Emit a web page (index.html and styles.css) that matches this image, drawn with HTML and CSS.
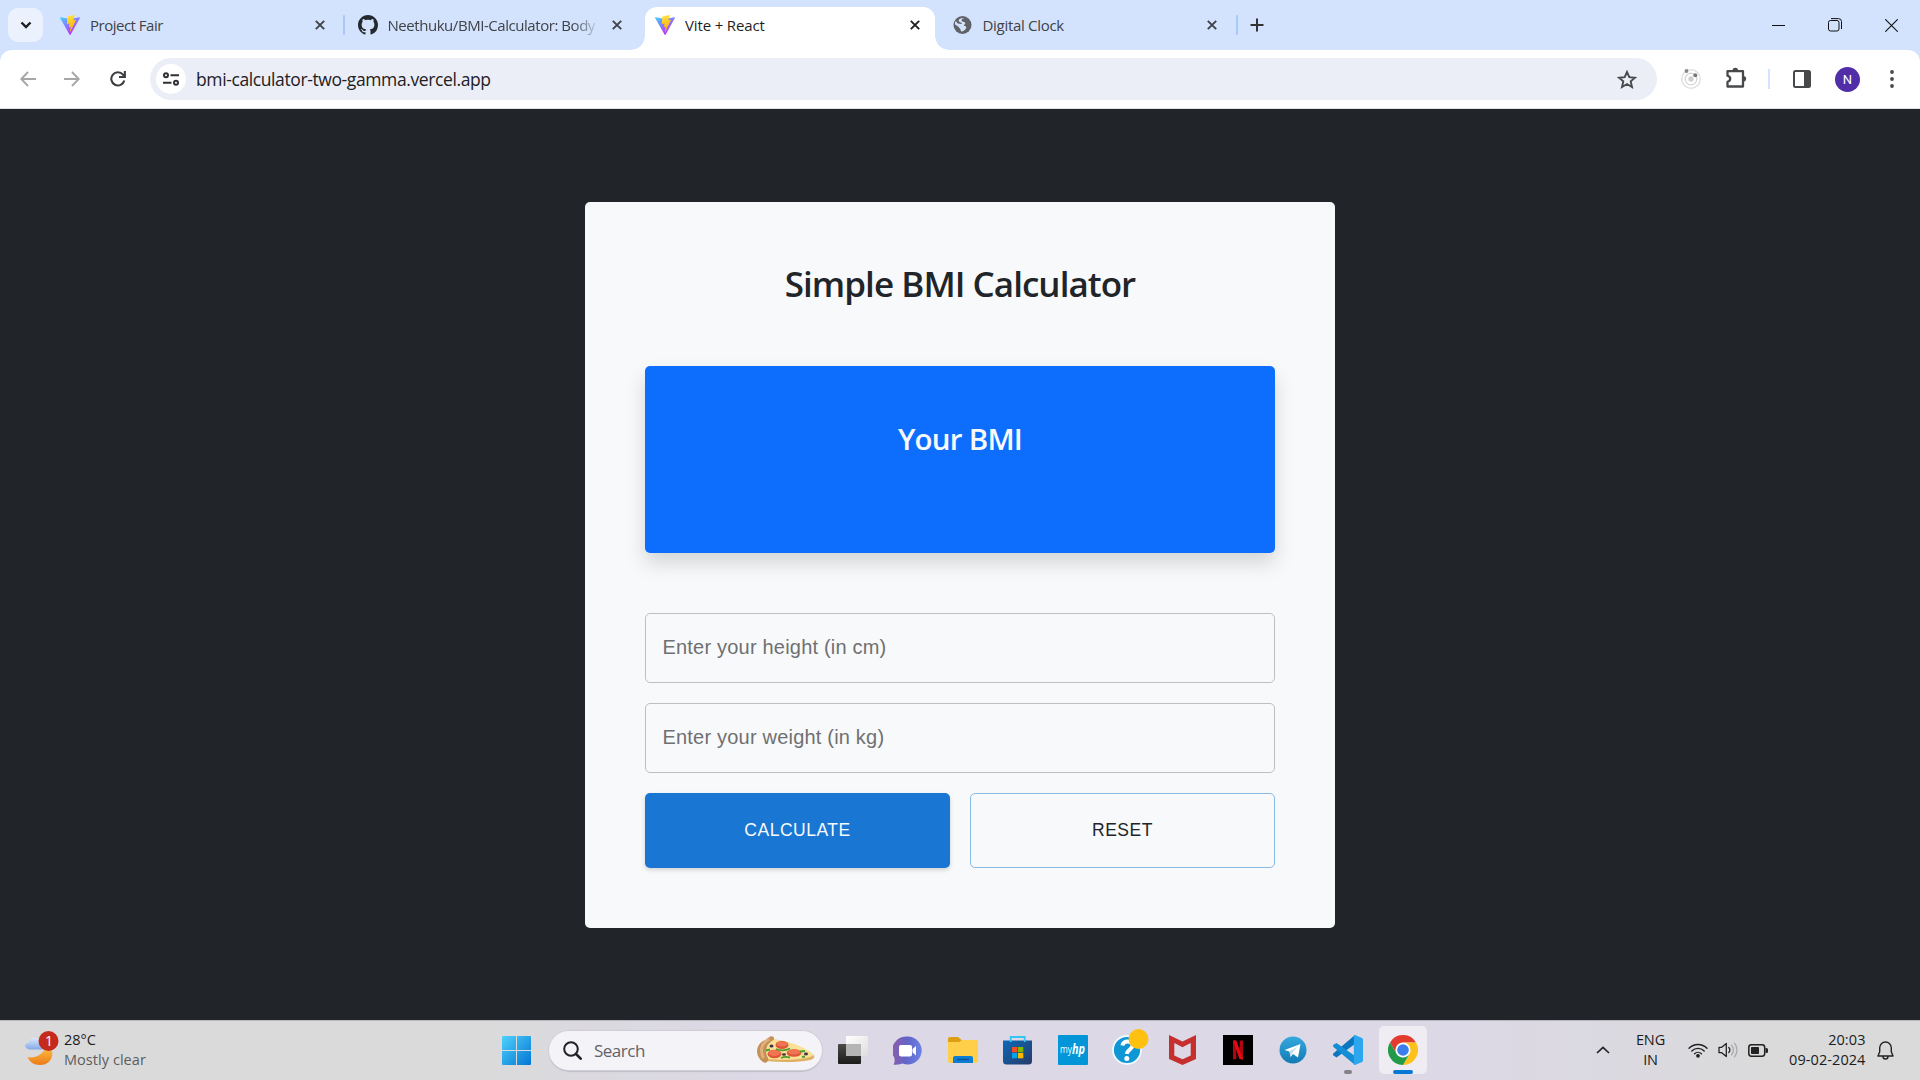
FILE: index.html
```html
<!DOCTYPE html>
<html lang="en">
<head>
<meta charset="utf-8">
<title>Vite + React</title>
<link rel="stylesheet" href="styles.css">
</head>
<body>
<svg width="0" height="0" class="defs" aria-hidden="true">
  <defs>
    <linearGradient id="vite-a" x1="0" y1="0" x2="0.6" y2="0.9"><stop offset="0" stop-color="#41d1ff"/><stop offset="1" stop-color="#bd34fe"/></linearGradient>
    <linearGradient id="vite-b" x1="0.4" y1="0" x2="0.6" y2="1"><stop offset="0" stop-color="#ffea83"/><stop offset="0.1" stop-color="#ffdd35"/><stop offset="1" stop-color="#ffa800"/></linearGradient>
    <symbol id="vite" viewBox="0 0 256 257">
      <path fill="url(#vite-a)" d="M255.2 37.9 134.9 253.1c-2.5 4.4-8.9 4.5-11.4 0L.9 37.9c-2.7-4.8 1.4-10.6 6.8-9.6l120.4 21.5c.8.1 1.6.1 2.3 0l117.9-21.5c5.4-1 9.6 4.8 6.9 9.6z"/>
      <path fill="url(#vite-b)" d="M185.4.1 96.4 17.5a3.3 3.3 0 0 0-2.6 3l-5.5 92.5a3.3 3.3 0 0 0 4 3.4l24.8-5.7c2.3-.5 4.4 1.5 3.9 3.8l-7.3 36c-.5 2.4 1.8 4.5 4.1 3.8l15.3-4.7c2.4-.7 4.6 1.4 4.1 3.8l-11.7 56.6c-.7 3.5 4 5.5 5.9 2.5l1.3-2 72.5-144.7c1.2-2.4-.9-5.2-3.5-4.7l-25.5 5c-2.4.4-4.4-1.8-3.8-4.1l16.7-57.7c.7-2.3-1.4-4.5-3.7-4.2z"/>
    </symbol>
    <symbol id="close" viewBox="0 0 10 10"><path d="M.8.8 9.2 9.2M9.2.8.8 9.2" stroke="currentColor" stroke-width="1.9" fill="none"/></symbol>
  </defs>
</svg>

<div class="screen">
  <header class="tabstrip">
    <button class="tab-search" aria-label="Search tabs"><svg width="12" height="8" viewBox="0 0 12 8"><path d="M1.5 1.5 6 6l4.500-4.500" fill="none" stroke="#1f1f1f" stroke-width="2.400"/></svg></button>
    <div class="tab">
      <svg class="favicon"><use href="#vite"/></svg>
      <span class="tab-title t1">Project Fair</span>
      <svg class="tab-close"><use href="#close"/></svg>
    </div>
    <i class="tab-sep"></i>
    <div class="tab">
      <svg class="favicon" viewBox="0 0 16 16"><path fill="#24292f" d="M8 0C3.580 0 0 3.580 0 8c0 3.540 2.290 6.530 5.470 7.590.4.070.55-.17.55-.38 0-.19-.01-.82-.01-1.490-2.010.37-2.530-.49-2.690-.94-.09-.23-.48-.94-.82-1.130-.28-.15-.68-.52-.01-.53.63-.01 1.080.58 1.230.82.72 1.210 1.870.87 2.330.66.070-.52.28-.87.51-1.070-1.780-.2-3.640-.89-3.640-3.950 0-.87.31-1.590.82-2.150-.08-.2-.36-1.020.08-2.120 0 0 .67-.21 2.200.82.64-.18 1.320-.27 2-.27s1.360.09 2 .27c1.530-1.040 2.200-.82 2.200-.82.44 1.100.16 1.920.08 2.120.51.56.82 1.270.82 2.150 0 3.070-1.870 3.750-3.650 3.950.29.25.54.73.54 1.480 0 1.070-.01 1.930-.01 2.200 0 .21.15.46.55.38A8 8 0 0 0 16 8c0-4.420-3.580-8-8-8z"/></svg>
      <span class="tab-title t2 faded">Neethuku/BMI-Calculator: Body</span>
      <svg class="tab-close"><use href="#close"/></svg>
    </div>
    <i class="tab-sep clear"></i>
    <div class="tab active">
      <svg class="favicon"><use href="#vite"/></svg>
      <span class="tab-title t3">Vite + React</span>
      <svg class="tab-close"><use href="#close"/></svg>
    </div>
    <i class="tab-sep clear"></i>
    <div class="tab">
      <svg class="favicon" viewBox="0 0 20 20"><circle cx="9.500" cy="10" r="9" fill="#5f6368"/><path d="M11.200 3.200c-2 .2-2.700 1-2.500 2.200.2 1.100 1 1.200 2.400 1.500 1.500.3 1.500 2 .4 2.500-1.200.6-.7 1.400.6 1.600 1.400.2 1.600 1.900.5 3-1.200 1.200-2.400 2.700-4.500 2.600l-.8-2.600-2.200-2.600-3-2c-.4-1.400 0-2.500.5-3.300l2.200 2.300 3.700.7c.7-.4.3-1.500-.8-1.700-1.500-.3-2.400-1-1.900-2.300.5-1.200 2.300-2.400 5.400-1.900z" fill="#d3e3fd"/></svg>
      <span class="tab-title t4">Digital Clock</span>
      <svg class="tab-close"><use href="#close"/></svg>
    </div>
    <i class="tab-sep last"></i>
    <svg class="new-tab" width="14" height="14" viewBox="0 0 14 14"><path d="M7 .5v13M.5 7h13" stroke="#333" stroke-width="2"/></svg>
    <div class="window-controls">
      <svg width="13" height="13" viewBox="0 0 13 13"><path d="M0 6.500h13" stroke="#111"/></svg>
      <svg width="14" height="14" viewBox="0 0 14 14" fill="none" stroke="#111"><rect x=".5" y="2.500" width="10.500" height="10.500" rx="2"/><path d="M3 .6h7.500a3 3 0 0 1 3 3V11"/></svg>
      <svg width="13" height="13" viewBox="0 0 13 13"><path d="m.3.3 12.400 12.400M12.700.3.300 12.700" stroke="#111" stroke-width="1.100"/></svg>
    </div>
  </header>

  <nav class="toolbar">
    <svg class="nav-icon back" viewBox="0 0 16 16"><path d="M8 1 1.300 8 8 15M1.500 8H16" fill="none" stroke="#a5a7a9" stroke-width="1.900"/></svg>
    <svg class="nav-icon forward" viewBox="0 0 16 16"><path d="m8 1 6.700 7L8 15M14.500 8H0" fill="none" stroke="#a5a7a9" stroke-width="1.900"/></svg>
    <svg class="nav-icon reload" viewBox="0 0 16 16"><path d="M14.300 9.500A6.600 6.600 0 1 1 13 3.700l1.500 1.800" fill="none" stroke="#3c3e40" stroke-width="2.100"/><path d="M15.900 0v7H9V5h4.800V0z" fill="#3c3e40"/></svg>
    <div class="omnibox">
      <span class="site-info"><svg width="16" height="14" viewBox="0 0 16 14" fill="none" stroke="#303234" stroke-width="2"><circle cx="3" cy="3.200" r="2"/><path d="M7.500 3.200H16M0 10.800h8.500"/><circle cx="13" cy="10.800" r="2"/></svg></span>
      <span class="url">bmi-calculator-two-gamma.vercel.app</span>
      <svg class="star" width="20" height="19" viewBox="0 0 20 19"><path d="m10 2 2.300 5.200 5.700.5-4.300 3.700 1.300 5.600-5-3-5 3 1.300-5.600L2 7.700l5.700-.5z" fill="none" stroke="#47494b" stroke-width="1.900"/></svg>
    </div>
    <svg class="ext" width="20" height="22" viewBox="0 0 20 22" fill="none"><circle cx="10" cy="12" r="9.300" stroke="#dedede" stroke-width="1.300"/><circle cx="10" cy="12" r="5.800" stroke="#d6d6d6" stroke-width="1.300"/><circle cx="10" cy="12" r="2.700" fill="#cfcfcf"/><circle cx="5.500" cy="4" r="1.900" fill="#888"/><circle cx="14.300" cy="8.300" r="2" fill="#777"/></svg>
    <svg class="puzzle" width="21" height="21" viewBox="0 0 21 21"><path d="M1.500 4.200H17V19.500H1.500v-4.600c3.600-1.200 3.600-5 0-6.200z" fill="none" stroke="#47494b" stroke-width="2.300" stroke-linejoin="round"/><path d="M6.500 4a2.800 3.200 0 0 1 5.600 0zM17 9a3.200 2.800 0 0 1 0 5.600z" fill="#47494b"/></svg>
    <i class="tool-sep"></i>
    <svg class="panel" width="18" height="18" viewBox="0 0 18 18"><rect x="1" y="1" width="16" height="16" rx="1.500" fill="none" stroke="#47494b" stroke-width="2"/><path d="M11 1h6v16h-6z" fill="#47494b"/></svg>
    <span class="avatar">N</span>
    <svg class="kebab" width="4" height="18" viewBox="0 0 4 18" fill="#47494b"><circle cx="2" cy="2" r="1.900"/><circle cx="2" cy="9" r="1.900"/><circle cx="2" cy="16" r="1.900"/></svg>
  </nav>

  <main class="page">
    <section class="card">
      <h1 class="title">Simple BMI Calculator</h1>
      <div class="result"><h3 class="result-title">Your BMI</h3></div>
      <form class="form">
        <input class="field" type="text" placeholder="Enter your height (in cm)">
        <input class="field" type="text" placeholder="Enter your weight (in kg)">
        <div class="actions">
          <button class="btn primary" type="button">CALCULATE</button>
          <button class="btn outlined" type="button">RESET</button>
        </div>
      </form>
    </section>
  </main>

  <footer class="taskbar">
    <div class="weather">
      <svg width="35" height="36" viewBox="0 0 35 36">
        <defs><linearGradient id="moon" x1="0" y1="0" x2="0" y2="1"><stop offset="0" stop-color="#ffc94a"/><stop offset="1" stop-color="#ec7a18"/></linearGradient><linearGradient id="cloud" x1="0" y1="0" x2="0" y2="1"><stop offset="0" stop-color="#dce9fb"/><stop offset="1" stop-color="#84a9e8"/></linearGradient></defs>
        <path d="M2.500 26c8 2 17-3 18.500-12 9 1 9.500 20-6 20-6 0-10.500-3-12.500-8z" fill="url(#moon)"/>
        <path d="M4 18.500C-2 17-.2 11.500 4 11.800 4 6 12 5 14 10l4 2v6.500z" fill="url(#cloud)"/>
        <circle cx="23.500" cy="10" r="10" fill="#c42b1c"/>
        <text x="24" y="15" class="badge">1</text>
      </svg>
      <div class="weather-text"><b class="temp">28°C</b><span class="cond">Mostly clear</span></div>
    </div>
    <div class="apps">
      <span class="app"><svg width="29" height="29" viewBox="0 0 29 29"><defs><linearGradient id="win" x1="0" y1="0" x2="1" y2="1"><stop offset="0" stop-color="#4fd2fb"/><stop offset="1" stop-color="#0275d4"/></linearGradient></defs><path d="M1 0h13v14H0V1a1 1 0 0 1 1-1zM15 0h13a1 1 0 0 1 1 1v13H15zM0 15h14v14H1a1 1 0 0 1-1-1zM15 15h14v13a1 1 0 0 1-1 1H15z" fill="url(#win)"/></svg></span>
      <div class="search">
        <svg width="19" height="19" viewBox="0 0 19 19" fill="none" stroke="#222"><circle cx="8" cy="8" r="6.800" stroke-width="2"/><path d="m13 13 4.700 4.700" stroke-width="2.600" stroke-linecap="round"/></svg>
        <span class="search-text">Search</span>
        <svg class="pizza" width="60" height="29" viewBox="0 0 60 29">
          <path d="M10 4 14 3C30 4 50 12 58 19.500c1 2-1 4-4 4.500-12 2.500-28 2.500-44 1z" fill="#dfb063"/>
          <path d="M12 3C28 3 50 11 58 19c-5 4-24 6-49 4z" fill="#fae195"/>
          <path d="M14 .7c3-1.200 5 1 3.500 3.300C10 8 8 15 12 22c1 4-2.500 6-5 4C-1 20-1 10 7 5c3-1 4.500-3 7-4.300z" fill="#c59058"/>
          <path d="M13 3C6 7 3.500 14 7.500 22" stroke="#deb17c" stroke-width="3" fill="none"/>
          <g fill="#dc5637"><ellipse cx="26" cy="9" rx="6.500" ry="4"/><ellipse cx="18.500" cy="18" rx="7" ry="4.200"/><ellipse cx="38" cy="17" rx="7.300" ry="3.800"/></g>
          <g fill="#f17552"><ellipse cx="26" cy="8" rx="5.500" ry="2.600"/><ellipse cx="18.500" cy="17" rx="6" ry="2.900"/><ellipse cx="38" cy="16" rx="6.200" ry="2.500"/></g>
          <path d="M20 13q7 3 14-.5M25 22q4-2 9-.5M10 14.500l4-1M44 15.500l5-.5M49 20.500l-3 .500" stroke="#4f9c31" stroke-width="1.900" fill="none"/>
          <g fill="#44304b"><ellipse cx="15.500" cy="10" rx="2" ry="1.500"/><ellipse cx="28" cy="18.500" rx="2" ry="1.300"/><ellipse cx="50" cy="18" rx="2" ry="1.400"/></g>
        </svg>
      </div>
      <span class="app"><svg width="30" height="30" viewBox="0 0 30 30"><defs><linearGradient id="tv" x1="0" y1="0" x2="0" y2="1"><stop offset="0" stop-color="#4a4a48"/><stop offset="1" stop-color="#1c1c1b"/></linearGradient><linearGradient id="tv2" x1="0" y1="0" x2="1" y2="1"><stop offset="0" stop-color="#fff"/><stop offset="1" stop-color="#dedede"/></linearGradient></defs><rect y="9" width="23" height="20" rx="1" fill="url(#tv)"/><rect x="8" y="1" width="22" height="20" rx="1" fill="url(#tv2)"/><path d="M8 9h15v12H8z" fill="#b5b5b5"/></svg></span>
      <span class="app"><svg width="29" height="29" viewBox="0 0 29 29"><defs><linearGradient id="chat" x1="0" y1="0.300" x2="1" y2="0.400"><stop offset="0" stop-color="#8d5da8"/><stop offset=".5" stop-color="#6264c9"/><stop offset="1" stop-color="#6c82e3"/></linearGradient></defs><path d="M14.500.5a14 14 0 1 1-5 27c-3 1-6 1.500-9 1.300 1-2 1.500-4 .8-7A14 14 0 0 1 14.500.5z" fill="url(#chat)"/><rect x="6" y="9" width="13" height="11.500" rx="2" fill="#fff"/><path d="m19.500 13 3.500-3v9.500l-3.500-3z" fill="#fff"/></svg></span>
      <span class="app"><svg width="30" height="28" viewBox="0 0 30 28"><path d="M0 3a2 2 0 0 1 2-2h8l3.500 3H28v8H0z" fill="#dd9e11"/><path d="M0 6h11l3-2h14a2 2 0 0 1 2 2v19a2 2 0 0 1-2 2H2a2 2 0 0 1-2-2z" fill="#ffcf49"/><path d="M5 27v-5a2 2 0 0 1 2-2h16a2 2 0 0 1 2 2v5z" fill="#0f7dd1"/><path d="M9 23.500h12" stroke="#07549b" stroke-width="1.400"/></svg></span>
      <span class="app"><svg width="29" height="30" viewBox="0 0 29 30"><defs><linearGradient id="store" x1="0" y1="0" x2="1" y2="1"><stop offset="0" stop-color="#0d69b8"/><stop offset="1" stop-color="#263b68"/></linearGradient></defs><path d="M0 5.500h29V26a3.500 3.500 0 0 1-3.500 3.500h-22A3.500 3.500 0 0 1 0 26z" fill="url(#store)"/><path d="M7.700 7V2h14v5" fill="none" stroke="#35c5f4" stroke-width="1.800"/><path d="M9 12h5.300v5.300H9z" fill="#f25022"/><path d="M15 12h5.300v5.300H15z" fill="#7fba00"/><path d="M9 18h5.300v5.300H9z" fill="#00a4ef"/><path d="M15 18h5.300v5.300H15z" fill="#ffb900"/></svg></span>
      <span class="app"><svg width="30" height="30" viewBox="0 0 30 30"><rect width="30" height="30" rx="1" fill="#0296d8"/><text x="2" y="18" class="my" textLength="12" lengthAdjust="spacingAndGlyphs">my</text><text x="14" y="19" class="hp" textLength="13" lengthAdjust="spacingAndGlyphs">hp</text></svg></span>
      <span class="app"><svg width="32" height="32" viewBox="0 0 32 32" overflow="visible"><circle cx="15" cy="16" r="14" fill="#0f96d4" stroke="#eefaff" stroke-width="1.800"/><path d="M10.500 11.500C11 6 20.500 6.500 20.500 11.500c0 4-5.500 4-5.500 8.500" fill="none" stroke="#fff" stroke-width="4"/><circle cx="14.800" cy="24.500" r="2.500" fill="#fff"/><circle cx="26.500" cy="5" r="10" fill="#ffc110"/></svg></span>
      <span class="app"><svg width="27" height="30" viewBox="0 0 27 30"><path d="M0 0 13.500 6.500 27 0v24l-13.500 6L0 24zM5.300 8v12.500l8.200 3.700 8.200-3.700V8l-8.200 4.300z" fill="#c5302e" fill-rule="evenodd"/></svg></span>
      <span class="app"><svg width="30" height="30" viewBox="0 0 30 30"><path d="M0 0h30v30H0z"/><path d="M10 5.500h3.300V24L10 24.500zM16.700 5.500H20v19l-3.300-.5z" fill="#b1060f"/><path d="M10 5.500h3.300L20 24.500l-3.500-.4z" fill="#e50914"/></svg></span>
      <span class="app"><svg width="28" height="28" viewBox="0 0 28 28"><defs><linearGradient id="tg" x1="0" y1="0" x2="0" y2="1"><stop offset="0" stop-color="#35a9df"/><stop offset="1" stop-color="#127ab4"/></linearGradient></defs><circle cx="14" cy="14" r="13.500" fill="url(#tg)"/><path d="M5.500 14 21.500 8 19 21.500l-5-3.500-2.500 3-1-5.500z" fill="#fff"/><path d="m10.500 15.500 8-5-5.500 6.500-1.500 3.800z" fill="#bfdaea"/></svg></span>
      <span class="app running"><svg width="30" height="30" viewBox="0 0 30 30"><path d="M22 0v9L3.500 22.500.5 20.500c-.7-.8-.7-1.500 0-2.300z" fill="#0b76bf"/><path d="M22 30v-9L3.500 8 .5 9.700c-.7.8-.7 1.500 0 2.300z" fill="#138dd4"/><path d="m22 0 7 3a2 2 0 0 1 1 1.800v20.400a2 2 0 0 1-1 1.800l-7 3c-.8 0-1.200-.5-1.200-1V1c0-.6.500-1 1.200-1z" fill="#2ba6ef"/></svg></span>
      <span class="app current"><svg width="30" height="30" viewBox="0 0 48 48"><path d="M3.200 12A24 24 0 0 1 44.800 12H24a12 12 0 0 0-10.400 18z" fill="#e33b2e"/><path d="M44.800 12A24 24 0 0 1 24 48l10.400-18A12 12 0 0 0 24 12z" fill="#fcc21b"/><path d="M24 48A24 24 0 0 1 3.200 12l10.400 18a12 12 0 0 0 20.800 0z" fill="#239a48"/><circle cx="24" cy="24" r="11.500" fill="#fff"/><circle cx="24" cy="24" r="9.300" fill="#3b7ded"/></svg></span>
    </div>
    <div class="tray">
      <svg class="chevron" width="14" height="8" viewBox="0 0 14 8"><path d="m1 7 6-5.700L13 7" fill="none" stroke="#222" stroke-width="1.700"/></svg>
      <div class="lang"><span>ENG</span><span>IN</span></div>
      <svg class="wifi" width="20" height="16" viewBox="0 0 20 16" fill="none" stroke="#222" stroke-width="1.400" stroke-linecap="round"><path d="M1 6.300a12.500 12.500 0 0 1 18 0M3.800 9a8.700 8.700 0 0 1 12.400 0M6.600 11.700a4.900 4.900 0 0 1 6.800 0"/><circle cx="10" cy="13.800" r="1.200" fill="#222"/></svg>
      <svg class="volume" width="20" height="16" viewBox="0 0 20 16" fill="none" stroke="#222" stroke-width="1.300" stroke-linejoin="round" stroke-linecap="round"><path d="M1 5.300h2.700L8.300 1.500v13l-4.600-3.800H1zM10.800 5.500a3.500 3.500 0 0 1 0 5"/><path d="M13.500 3.200a7 7 0 0 1 0 9.600M16.500 1.200a10.500 10.500 0 0 1 0 13.600" stroke="#aaa"/></svg>
      <svg class="battery" width="20" height="13" viewBox="0 0 20 13"><rect x=".8" y=".8" width="15.900" height="11.400" rx="2.600" fill="none" stroke="#222" stroke-width="1.500"/><rect x="3" y="3" width="8" height="7" rx=".8" fill="#222"/><path d="M17.500 4h1a1.500 1.500 0 0 1 1.500 1.500v2A1.500 1.500 0 0 1 18.500 9h-1z" fill="#222"/></svg>
      <div class="clock"><span class="time">20:03</span><span class="date">09-02-2024</span></div>
      <svg class="bell" width="17" height="19" viewBox="0 0 17 19" fill="none" stroke="#222" stroke-width="1.400" stroke-linejoin="round"><path d="M8.500 1a5.800 5.800 0 0 0-5.800 5.800v4L1 15h15l-1.700-4.200v-4A5.800 5.800 0 0 0 8.500 1zM6 15.500a2.500 2.500 0 0 0 5 0"/></svg>
    </div>
  </footer>
</div>
</body>
</html>
```

FILE: styles.css
```css
* { box-sizing: border-box; }
body { margin: 0; font-family: "Open Sans", "Noto Sans", sans-serif; }
svg { display: block; flex: none; }
button { font: inherit; padding: 0; border: 0; }
.defs { position: absolute; }
.screen { width: 1920px; height: 1080px; display: grid; grid-template-rows: 50px 59px 911px 60px; overflow: hidden; background: #212529; }

/* Tab strip */
.tabstrip { display: flex; align-items: center; background: #d3e3fd; padding-left: 8px; }
.tab-search { width: 35px; height: 34px; border-radius: 10px; background: #ebf2fe; display: grid; place-items: center; margin-right: 7px; flex: none; }
.tab { width: 290px; height: 43px; flex: none; margin-top: 7px; padding: 0 15.500px 7px 10px; display: flex; align-items: center; gap: 10px; color: #3f4246; position: relative; }
.tab.active { background: #fff; border-radius: 12px 12px 0 0; color: #1f1f1f; }
.tab.active::before, .tab.active::after { content: ""; position: absolute; bottom: 0; width: 14px; height: 14px; }
.tab.active::before { right: 100%; background: radial-gradient(circle at 0 0, transparent 13.500px, #fff 14px); }
.tab.active::after { left: 100%; background: radial-gradient(circle at 100% 0, transparent 13.500px, #fff 14px); }
.favicon { width: 20px; height: 20px; }
.tab-title { flex: 1; font-size: 15px; line-height: 20px; white-space: nowrap; overflow: hidden; }
.faded { margin-right: 2px; mask-image: linear-gradient(90deg, #000 185px, transparent 212px); }
.t1 { letter-spacing: -0.500px; }
.t2 { letter-spacing: -0.450px; }
.t3 { letter-spacing: -0.150px; }
.t4 { letter-spacing: -0.300px; }
.tab-close { width: 10px; height: 10px; }
.tab-sep { width: 2px; height: 20px; margin: 0 2.500px 0 3px; background: #a8c7fa; border-radius: 1px; flex: none; }
.tab-sep.clear { background: none; }
.new-tab { margin-left: 10px; }
.window-controls { margin-left: auto; margin-right: 22.500px; display: flex; align-items: center; gap: 43px; }

/* Toolbar */
.toolbar { display: flex; align-items: center; background: #d3e3fd; border-bottom: 1px solid #dfe2e7; position: relative; z-index: 0; }
.toolbar::before { content: ""; position: absolute; inset: 0; background: #fff; border-radius: 12px 12px 0 0; z-index: -1; }
.nav-icon { width: 16px; height: 16px; }
.back { margin-left: 20px; }
.forward { margin-left: 28px; }
.reload { margin-left: 29.500px; }
.omnibox { margin-left: 24.500px; width: 1507px; height: 42px; border-radius: 21px; background: #ebeef7; display: flex; align-items: center; padding: 0 20px 0 6px; }
.site-info { width: 30px; height: 30px; border-radius: 50%; background: #fff; display: grid; place-items: center; }
.url { flex: 1; margin-left: 10px; font-size: 17.500px; letter-spacing: -0.390px; line-height: 24px; color: #1f2023; }
.ext { margin-left: 23.500px; margin-top: -2px; }
.puzzle { margin-left: 25.500px; margin-top: -3px; }
.tool-sep { width: 2px; height: 20px; background: #d3e3fd; margin-left: 21px; }
.panel { margin-left: 23px; }
.avatar { width: 25px; height: 25px; margin-left: 24px; border-radius: 50%; background: #512da8; color: #fff; font: 13px/25px Roboto, sans-serif; text-align: center; }
.kebab { margin-left: 30px; }

/* Application page */
.page { padding-top: 93px; display: flex; justify-content: center; align-items: flex-start; }
.card { width: 750px; height: 726px; padding: 59px 60px 60px; border-radius: 5px; background: #f8f9fa; }
.title { margin: 0 0 60px; height: 45px; font-size: 35px; font-weight: 600; line-height: 45px; letter-spacing: -0.950px; text-align: center; color: #212529; }
.result { height: 187px; padding-top: 53px; background: #0d6efd; border-radius: 5px; box-shadow: 0 10px 20px rgba(0, 0, 0, 0.150); }
.result-title { margin: 0; font-size: 29.500px; line-height: 40px; font-weight: 600; text-align: center; color: #f8f9fa; letter-spacing: -0.750px; }
.form { margin-top: 60px; display: grid; gap: 20px; }
.field { width: 100%; height: 70px; border: 1px solid #bebfc0; border-radius: 5px; background: transparent; padding: 0 16.500px 2px; font: 20px "Liberation Sans", sans-serif; letter-spacing: 0.200px; }
.field::placeholder { color: #6f7071; opacity: 1; }
.actions { display: grid; grid-template-columns: 1fr 1fr; gap: 20px; }
.btn { height: 75px; border-radius: 5px; font: 500 17.500px "Liberation Sans", sans-serif; letter-spacing: 0.500px; }
.primary { background: #1976d2; color: #f8f9fa; box-shadow: 0 2px 4px rgba(0, 0, 0, 0.160); }
.outlined { background: transparent; border: 1px solid #8bb9e5; color: #212529; }

/* Taskbar */
.taskbar { display: flex; align-items: center; border-top: 1px solid #b9b6bd; padding-bottom: 1px; background: linear-gradient(90deg, #dadada 0, #dadada 24%, #dcd8e6 40%, #dcd8e6 75%, #dadada 93%); color: #1c1c1c; }
.weather { width: 489px; display: flex; align-items: center; padding-left: 25px; }
.weather svg { margin-top: -3px; }
.weather-text { display: grid; margin-left: 4px; font-size: 14.500px; line-height: 20px; }
.temp { font-weight: 400; letter-spacing: 0; }
.cond { color: #5c5c5e; letter-spacing: 0.050px; }
.badge { font: 14px "Open Sans", sans-serif; fill: #fff; text-anchor: middle; }
.apps { display: flex; align-items: center; }
.app { width: 55px; height: 48px; display: grid; place-items: center; position: relative; }
.search { width: 273px; height: 39px; margin: 0 3.500px 0 4.500px; border-radius: 20px; background: #f4f3f8; box-shadow: 0 0 0 1px #cfcdd6, 0 1.500px 1px #aaa8b1; display: flex; align-items: center; padding: 0 6px 0 14px; }
.search-text { margin-left: 12.500px; flex: 1; font-size: 17px; color: #626266; letter-spacing: -0.500px; }
.my { font: 10px "Open Sans", sans-serif; fill: #fff; }
.hp { font: italic 700 15px "Open Sans", sans-serif; fill: #fff; }
.running::after, .current::after { content: ""; position: absolute; bottom: 0; height: 4px; border-radius: 2px; }
.running::after { width: 8px; background: #858388; }
.current::after { width: 20px; background: #0878d4; }
.current { width: 48px; margin-left: 3.500px; border-radius: 5px; background: #efedf3; }
.tray { margin-left: auto; padding-right: 26.500px; display: flex; align-items: center; font-size: 14.500px; line-height: 20px; }
.lang { width: 34px; margin-left: 24px; display: grid; text-align: center; letter-spacing: -0.150px; }
.wifi { margin-left: 20px; }
.volume { margin-left: 10px; }
.battery { margin-left: 10px; }
.clock { width: 78px; margin-left: 20px; display: grid; justify-items: end; letter-spacing: 0.080px; white-space: nowrap; }
.bell { margin-left: 11px; }
```
